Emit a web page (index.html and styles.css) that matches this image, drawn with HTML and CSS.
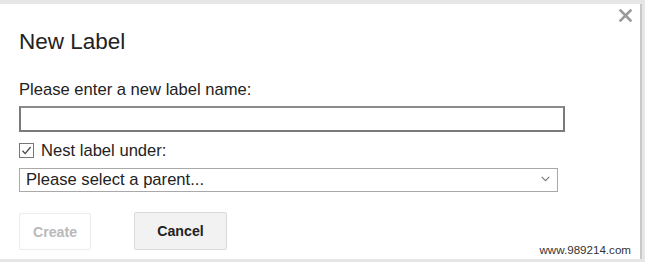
FILE: index.html
```html
<!DOCTYPE html>
<html>
<head>
<meta charset="utf-8">
<link rel="stylesheet" href="styles.css">
</head>
<body>
<div class="dialog">
  <div class="close" aria-label="Close">
    <svg width="13" height="13" viewBox="0 0 13 13"><path d="M1.5 1.5L11.5 11.5M11.5 1.5L1.5 11.5" stroke="#9a9a9a" stroke-width="2.6" stroke-linecap="square"/></svg>
  </div>
  <h1 class="title">New Label</h1>
  <div class="field-label">Please enter a new label name:</div>
  <div class="text-input"></div>
  <div class="nest-row">
    <span class="checkbox">
      <svg width="13" height="13" viewBox="0 0 13 13"><path d="M2.5 6.8L5.2 9.6L10.6 3" fill="none" stroke="#444" stroke-width="1.3"/></svg>
    </span>
    <span class="nest-text">Nest label under:</span>
  </div>
  <div class="select">
    <span>Please select a parent...</span>
    <svg width="9" height="6" viewBox="0 0 9 6"><path d="M0.7 0.8L4.5 4.6L8.3 0.8" fill="none" stroke="#777" stroke-width="1.1"/></svg>
  </div>
  <div class="buttons">
    <div class="btn btn-create">Create</div>
    <div class="btn btn-cancel">Cancel</div>
  </div>
  <div class="watermark">www.989214.com</div>
</div>
</body>
</html>
```
FILE: styles.css
```css
html, body {
  margin: 0;
  padding: 0;
}
body {
  width: 645px;
  height: 262px;
  background: #e6e6e6;
  font-family: "Liberation Sans", Arial, sans-serif;
  overflow: hidden;
}
.dialog {
  position: relative;
  box-sizing: border-box;
  width: 642px;
  height: 255px;
  margin-top: 4px;
  background: #fff;
  border-right: 2px solid #c8c8c8;
  padding: 25px 0 0 19px;
}
.close {
  position: absolute;
  top: 5px;
  right: 8px;
  width: 13px;
  height: 13px;
}
.close svg { display: block; }
.title {
  margin: 0;
  font-size: 22.5px;
  font-weight: normal;
  color: #222;
  line-height: 26px;
}
.field-label {
  margin-top: 25px;
  font-size: 16.6px;
  line-height: 19px;
  color: #222;
}
.text-input {
  box-sizing: border-box;
  margin-top: 7px;
  width: 546px;
  height: 26px;
  border: 2px solid #7a7a7a;
  border-top-color: #8a8a8a;
  background: #fff;
}
.nest-row {
  display: flex;
  align-items: center;
  margin-top: 9px;
  height: 19px;
}
.checkbox {
  box-sizing: border-box;
  width: 15px;
  height: 15px;
  border: 1px solid #777;
  display: flex;
  align-items: center;
  justify-content: center;
  background: #fff;
}
.checkbox svg { display: block; }
.nest-text {
  margin-left: 7px;
  font-size: 16.6px;
  color: #222;
}
.select {
  box-sizing: border-box;
  display: flex;
  align-items: center;
  justify-content: space-between;
  margin-top: 8px;
  width: 539px;
  height: 24px;
  border: 1px solid #a9a9a9;
  padding: 0 7px 0 6px;
  font-size: 16.6px;
  color: #222;
}
.select svg { display: block; margin-top: -2px; }
.buttons {
  display: flex;
  gap: 43px;
  margin-top: 21px;
}
.btn {
  box-sizing: border-box;
  height: 37px;
  display: flex;
  align-items: center;
  justify-content: center;
  font-size: 14.2px;
  font-weight: bold;
  border-radius: 2px;
}
.btn-create {
  width: 72px;
  color: #b9b9b9;
  background: #fff;
  border: 1px solid #ececec;
}
.btn-cancel {
  width: 93px;
  height: 38px;
  color: #222;
  background: #f2f2f2;
  border: 1px solid #dadada;
  margin-top: -1px;
}
.watermark {
  position: absolute;
  right: 9px;
  bottom: 3px;
  font-size: 11.6px;
  color: #333;
  background: #fff;
}
```
